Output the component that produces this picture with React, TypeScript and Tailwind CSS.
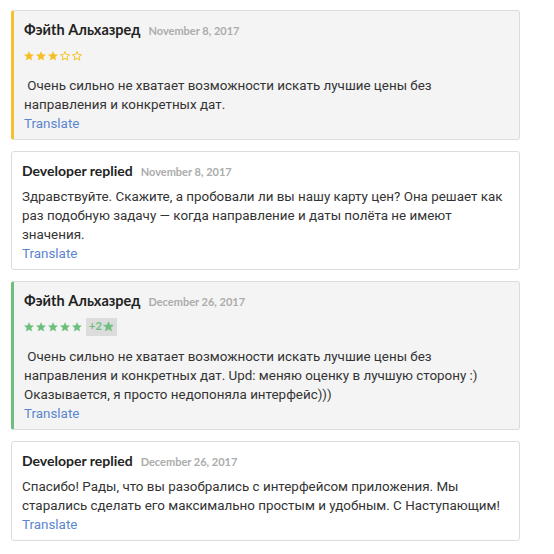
import React from 'react';

type Review = {
  kind: 'review' | 'reply';
  name: string;
  date: string;
  text: string;
  stars?: number;
  color?: 'yellow' | 'green';
  bonus?: string;
};

const items: Review[] = [
  {
    kind: 'review',
    name: 'Фэйth Альхазред',
    date: 'November 8, 2017',
    stars: 3,
    color: 'yellow',
    text: '\u00a0Очень сильно не хватает возможности искать лучшие цены без направления и конкретных дат.',
  },
  {
    kind: 'reply',
    name: 'Developer replied',
    date: 'November 8, 2017',
    text: 'Здравствуйте. Скажите, а пробовали ли вы нашу карту цен? Она решает как раз подобную задачу — когда направление и даты полёта не имеют значения.',
  },
  {
    kind: 'review',
    name: 'Фэйth Альхазред',
    date: 'December 26, 2017',
    stars: 5,
    color: 'green',
    bonus: '+2',
    text: '\u00a0Очень сильно не хватает возможности искать лучшие цены без направления и конкретных дат. Upd: меняю оценку в лучшую сторону :) Оказывается, я просто недопоняла интерфейс)))',
  },
  {
    kind: 'reply',
    name: 'Developer replied',
    date: 'December 26, 2017',
    text: 'Спасибо! Рады, что вы разобрались с интерфейсом приложения. Мы старались сделать его максимально простым и удобным. С Наступающим!',
  },
];

function Star({ filled, color, size = 10 }: { filled: boolean; color: string; size?: number }) {
  return (
    <svg width={size} height={size} viewBox="0 0 24 24" className="shrink-0">
      <path
        d="M12 1.5l3.1 7.1 7.6.6-5.8 5 1.8 7.5L12 17.7l-6.7 4 1.8-7.5-5.8-5 7.6-.6z"
        fill={filled ? color : 'none'}
        stroke={color}
        strokeWidth={filled ? 1 : 2.4}
        strokeLinejoin="round"
      />
    </svg>
  );
}

function Card({ item }: { item: Review }) {
  const isReview = item.kind === 'review';
  const starColor = item.color === 'green' ? '#6cbf7c' : '#f5c023';
  const border = isReview
    ? item.color === 'green'
      ? 'bg-[#f4f4f4] border-l-[3px] border-l-[#6cbf7c]'
      : 'bg-[#f4f4f4] border-l-[3px] border-l-[#f5c12e]'
    : 'bg-white';

  return (
    <div className={`rounded-[3px] border border-[#dcdcdc] pl-[10px] pr-[10px] pt-[9px] pb-[6px] ${border}`}>
      <div className="flex items-baseline gap-2 leading-[20px]">
        <span
          className={`font-['Lato',sans-serif] font-bold ${isReview ? 'text-[14.5px]' : 'text-[14px]'} text-[#222]`}
        >
          {item.name}
        </span>
        <span className="font-['Lato',sans-serif] font-bold text-[11px] text-[#acacac]">{item.date}</span>
      </div>
      {isReview && (
        <div className="mt-[6px] flex h-[17px] items-center">
          <div className="flex items-center gap-[2px]">
            {[0, 1, 2, 3, 4].map((i) => (
              <Star key={i} filled={i < (item.stars ?? 0)} color={starColor} />
            ))}
          </div>
          {item.bonus && (
            <div className="ml-[4px] flex h-[18px] items-center gap-[1px] bg-[#dcdcdc] px-[3px] font-['Lato',sans-serif] font-bold text-[11px] text-[#6cbf7c]">
              {item.bonus}
              <Star filled color="#6cbf7c" size={11} />
            </div>
          )}
        </div>
      )}
      <p
        className={`${isReview ? 'mt-[12px]' : 'mt-[5px]'} font-['Roboto',sans-serif] text-[13.4px] leading-[19px] text-[#333]`}
      >
        {item.text}
      </p>
      <div className="font-['Roboto',sans-serif] text-[13.4px] leading-[19px] text-[#5a86cf]">Translate</div>
    </div>
  );
}

export default function App() {
  return (
    <div className="min-h-[554px] w-[554px] bg-white pl-[11px] pt-[10px]">
      <div className="flex w-[509px] flex-col gap-[11px]">
        {items.map((item, i) => (
          <Card key={i} item={item} />
        ))}
      </div>
    </div>
  );
}
